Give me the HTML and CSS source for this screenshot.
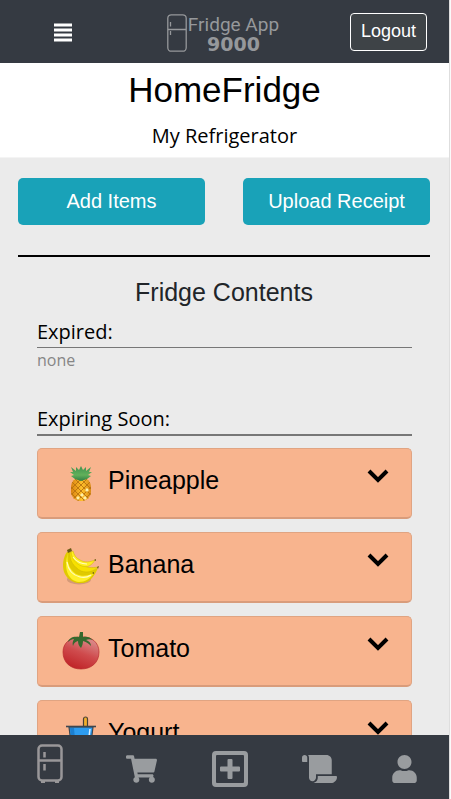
FILE: index.html
```html
<!DOCTYPE html>
<html lang="en">
<head>
<meta charset="utf-8">
<meta name="viewport" content="width=device-width, initial-scale=1">
<title>Fridge App 9000</title>
<link rel="stylesheet" href="styles.css">
</head>
<body>
<div class="app">
  <header class="topbar">
    <button class="menu" type="button" aria-label="Menu">
      <svg width="18" height="19" viewBox="0 0 18 19" fill="#fff"><path d="M0 .5h18v3H0zM0 5.500h18v3H0zM0 10.500h18v3H0zM0 15.500h18v3H0z"/></svg>
    </button>
    <a class="logo" href="#">
      <svg width="20" height="38" viewBox="0 0 20 38" fill="none" stroke="#96989b" stroke-width="1.300"><rect x=".8" y=".8" width="18.400" height="36.400" rx="3.500"/><path d="M1 15.500h18M3.500 8v4.500M3.500 17v4"/></svg>
      <span class="logo-text"><span class="logo-name">Fridge App</span><span class="logo-number">9000</span></span>
    </a>
    <button class="logout" type="button">Logout</button>
  </header>

  <main class="content">
    <section class="heading">
      <h1>HomeFridge</h1>
      <p>My Refrigerator</p>
    </section>
    <section class="body">
      <div class="actions">
        <button type="button">Add Items</button>
        <button type="button">Upload Receipt</button>
      </div>
      <h2>Fridge Contents</h2>
      <div class="lists">
        <h3>Expired:</h3>
        <p class="none">none</p>
        <h3 class="soon">Expiring Soon:</h3>
        <div class="items">
          <button class="item" type="button">
            <svg class="food" viewBox="0 0 38 38">
              <defs>
                <linearGradient id="pine" x2="1"><stop stop-color="#d98210"/><stop offset=".55" stop-color="#ffc02b"/><stop offset="1" stop-color="#d98a18"/></linearGradient>
                <linearGradient id="leaf" x2="0" y2="1"><stop stop-color="#3d9150"/><stop offset=".6" stop-color="#62b05a"/><stop offset="1" stop-color="#2f7d43"/></linearGradient>
                <clipPath id="fruit"><rect x="9" y="13.500" width="20" height="23.500" rx="9"/></clipPath>
              </defs>
              <rect x="9" y="13.500" width="20" height="23.500" rx="9" fill="url(#pine)"/>
              <g clip-path="url(#fruit)">
                <path fill="none" stroke="#b8720f" stroke-width=".9" d="M8 10l24 24M14 10l20 20M8 16l24 24M8 22l18 18M8 28l12 12M30 10L6 34M24 10L6 28M32 14L8 38M32 20L12 40M32 26L18 40"/>
                <path fill="#fff0a8" d="M25 24l2 2-2 2-2-2zM20 29l2 2-2 2-2-2zM16 32l2 2-2 2-2-2zM23 32l2 2-2 2-2-2z"/>
              </g>
              <path fill="url(#leaf)" d="M19 2l2 4 3-3v4l5-4-2 5 3 0-4 3 3 1-4 3-3 1-3 1-3-1-3-1-4-3 3-1-4-3 3 0-2-5 5 4V3l3 3z"/>
            </svg>
            <span class="name">Pineapple</span>
            <svg class="chevron" viewBox="0 0 22 14"><path d="M2 2l9 9 9-9"/></svg>
          </button>
          <button class="item" type="button">
            <svg class="food" viewBox="0 0 38 38">
              <ellipse cx="17" cy="31.500" rx="12" ry="5" fill="#d49a78"/>
              <path fill="#e0ca00" d="M5 4C1 9 0 18 2 24c3 8 11 12 18 11 7 0 12-6 16-15-7 4-12 4-16 2C13 18 9 12 9 4z"/>
              <path fill="#fff02a" d="M6 5C4 14 8 22 14 26c6 3 12 2 18-1-4 6-9 9-15 9C6 33 1 20 6 5z"/>
              <path fill="#f7e100" stroke="#cbb500" stroke-width=".5" d="M8 4c-1 9 4 15 11 19 6 2 12 1 17-4-6 1-11 1-15-2-6-3-10-7-11-13z"/>
              <path fill="#ffef20" stroke="#cbb500" stroke-width=".5" d="M9 4c1 7 5 12 11 14 6 2 10-1 13-6-5 2-10 3-15 0-4-2-6-5-7-9z"/>
              <path fill="none" stroke="#fffcc0" stroke-width="1.200" d="M5 14c1 7 5 13 13 15 4 1 8 0 11-2M11 9c3 4 8 7 14 7"/>
              <path fill="#6b5b14" d="M5 2l4-2 1 3-4 2zM32 12l2-1v2zM35 19l2-1-1 3zM30 25l2-1v2z"/>
            </svg>
            <span class="name">Banana</span>
            <svg class="chevron" viewBox="0 0 22 14"><path d="M2 2l9 9 9-9"/></svg>
          </button>
          <button class="item" type="button">
            <svg class="food" viewBox="0 0 38 38">
              <defs><linearGradient id="tom" x1=".7" y1=".1" x2=".3" y2="1"><stop stop-color="#d98585"/><stop offset=".45" stop-color="#cf4b4d"/><stop offset="1" stop-color="#bf2226"/></linearGradient></defs>
              <path fill="url(#tom)" stroke="#b92b2d" stroke-width=".7" d="M19 5c11-1 18 6 18 15 0 11-8 17-18 17S1 31 1 20C1 11 8 5 19 5z"/>
              <path fill="#36692e" d="M18 0h3v5c4-1 7 0 10 3-3-1-5-1-7 0 3 1 5 3 5 6-3-3-5-4-8-5 0 3-1 5-2 7-2-2-3-4-3-7-3 1-4 2-5 5-1-3 0-5 1-7-2 0-4 1-6 3 1-4 5-6 11-5z"/>
            </svg>
            <span class="name">Tomato</span>
            <svg class="chevron" viewBox="0 0 22 14"><path d="M2 2l9 9 9-9"/></svg>
          </button>
          <button class="item" type="button">
            <svg class="food" viewBox="0 0 38 38">
              <rect x="21.500" y="1" width="4" height="12" rx="2" fill="#f2ae2c" stroke="#4a4238" stroke-width="1.200"/>
              <path fill="#2d9cf0" stroke="#3d4650" stroke-width="1.200" d="M7 11h24l-3 24H10z"/>
              <path fill="#1c7fd0" d="M8 12h4l2 22h-3z"/><path stroke="#d8efff" stroke-width="1.500" d="M28 13l-1 8"/>
              <path stroke="#3d4650" stroke-width="1.600" d="M4 10.500h30"/>
            </svg>
            <span class="name">Yogurt</span>
            <svg class="chevron" viewBox="0 0 22 14"><path d="M2 2l9 9 9-9"/></svg>
          </button>
        </div>
      </div>
    </section>
  </main>

  <nav class="tabbar">
    <a class="tab tab-fridge" href="#" aria-label="Fridge">
      <svg width="26" height="39" viewBox="0 0 26 39" fill="none" stroke="#999799" stroke-width="2.500"><rect x="1.500" y="1.500" width="23" height="35" rx="3.500"/><path d="M1 16.500h24M7.500 8v5.500M7.500 20v6.500M4 38h4M18 38h4"/></svg>
    </a>
    <a class="tab" href="#" aria-label="Shopping cart">
      <svg width="31" height="28" viewBox="0 0 576 512"><path d="M528.12 301.319l47.273-208C578.806 78.301 567.391 64 551.99 64H159.208l-9.166-44.81C147.758 8.021 137.93 0 126.529 0H24C10.745 0 0 10.745 0 24v16c0 13.255 10.745 24 24 24h69.883l70.248 343.435C147.325 417.1 136 435.222 136 456c0 30.928 25.072 56 56 56s56-25.072 56-56c0-15.674-6.447-29.835-16.824-40h209.647C430.447 426.165 424 440.326 424 456c0 30.928 25.072 56 56 56s56-25.072 56-56c0-22.172-12.888-41.332-31.579-50.405l5.517-24.276c3.413-15.018-8.002-29.319-23.403-29.319H218.117l-6.545-32h293.145c11.206 0 20.92-7.754 23.403-18.681z"/></svg>
    </a>
    <a class="tab tab-add" href="#" aria-label="Add">
      <svg width="36" height="36" viewBox="0 0 36 36"><path fill-rule="evenodd" d="M4 0h28a4 4 0 0 1 4 4v28a4 4 0 0 1-4 4H4a4 4 0 0 1-4-4V4a4 4 0 0 1 4-4zm1 4a1 1 0 0 0-1 1v26a1 1 0 0 0 1 1h26a1 1 0 0 0 1-1V5a1 1 0 0 0-1-1z"/><path d="M15.500 9a1 1 0 0 1 1-1h3a1 1 0 0 1 1 1v6.500H27a1 1 0 0 1 1 1v3a1 1 0 0 1-1 1h-6.500V27a1 1 0 0 1-1 1h-3a1 1 0 0 1-1-1v-6.500H9a1 1 0 0 1-1-1v-3a1 1 0 0 1 1-1h6.500z"/></svg>
    </a>
    <a class="tab" href="#" aria-label="Receipts">
      <svg width="35" height="28" viewBox="0 0 640 512"><path d="M48 0C21.53 0 0 21.53 0 48v64c0 8.84 7.16 16 16 16h80V48C96 21.53 74.47 0 48 0zm208 412.57V352h288V96c0-52.94-43.06-96-96-96H111.59C121.74 13.41 128 29.92 128 48v368c0 38.87 34.65 69.65 74.75 63.12C234.22 474 256 444.46 256 412.57zM288 384v32c0 52.93-43.06 96-96 96h336c61.86 0 112-50.14 112-112 0-8.84-7.16-16-16-16H288z"/></svg>
    </a>
    <a class="tab" href="#" aria-label="Account">
      <svg width="25" height="28" viewBox="0 0 448 512"><path d="M224 256c70.700 0 128-57.300 128-128S294.700 0 224 0 96 57.300 96 128s57.300 128 128 128zm89.600 22h-16.700c-22.200 10.200-46.900 16-72.900 16s-50.600-5.800-72.900-16h-16.700C60.200 278 0 338.200 0 412.400V464c0 26.500 21.500 48 48 48h352c26.500 0 48-21.500 48-48v-51.600c0-74.200-60.200-134.400-134.400-134.400z"/></svg>
    </a>
  </nav>
</div>
</body>
</html>
```
FILE: styles.css
```css
* {
  box-sizing: border-box;
}

body {
  margin: 0;
  padding-right: 1px;
  background: #fafafa;
  color: #000;
  font-family: "Liberation Sans", Arial, sans-serif;
}

h1, h2, h3, p {
  margin: 0;
  font-weight: 400;
}

button {
  font-family: inherit;
  cursor: pointer;
}

svg {
  display: block;
  flex: none;
}

.app {
  display: flex;
  flex-direction: column;
  height: 100vh;
  border-right: 1px solid #dedede;
  background: #ebebeb;
}

.topbar {
  display: flex;
  flex: none;
  align-items: center;
  justify-content: space-between;
  height: 63px;
  padding: 0 22px 0 54px;
  background: #353a42;
}

.menu {
  padding: 2px 0 0;
  border: 0;
  background: none;
}

.logo {
  display: flex;
  align-items: center;
  gap: 1px;
  margin-left: 24px;
  padding-top: 2px;
  color: #96989b;
  text-decoration: none;
}

.logo-text {
  display: flex;
  flex-direction: column;
  align-items: center;
}

.logo-name {
  font: 19px/22px Roboto, sans-serif;
}

.logo-number {
  font: 700 19px/16px "DejaVu Sans", sans-serif;
}

.logout {
  height: 38px;
  padding: 0 10px;
  border: 1px solid #fff;
  border-radius: 4px;
  background: #3e4347;
  color: #fff;
  font-size: 18px;
}

.content {
  flex: 1;
  min-height: 0;
  overflow: hidden;
}

.heading {
  padding: 6px 0;
  border-bottom: 1px solid #f4f4f4;
  background: #fff;
  text-align: center;
}

.heading h1 {
  font-size: 35px;
  line-height: 42px;
}

.heading p {
  padding-top: 10px;
  font: 20px/30px "Open Sans", sans-serif;
}

.body {
  padding: 20px 19px 20px 18px;
}

.actions {
  display: grid;
  grid-template-columns: 1fr 1fr;
  gap: 38px;
  padding-bottom: 30px;
  border-bottom: 2px solid #000;
}

.actions button {
  height: 47px;
  padding: 0;
  border: 0;
  border-radius: 5px;
  background: #19a2b8;
  color: #fff;
  font-size: 20px;
}

.body h2 {
  padding-top: 20px;
  color: #212529;
  font-size: 25px;
  line-height: 30px;
  text-align: center;
}

.lists {
  padding: 10px 18px 0 19px;
}

.lists h3 {
  border-bottom: 1px solid #777;
  font: 20px/30px "Open Sans", sans-serif;
}

.none {
  color: #868686;
  font: 16px/24px "Open Sans", sans-serif;
}

.lists .soon {
  margin-top: 32px;
  border-bottom-width: 2px;
}

.items {
  display: grid;
  gap: 13px;
  padding-top: 12px;
}

.item {
  display: flex;
  align-items: flex-start;
  height: 71px;
  padding: 15px 22px 0 24px;
  border: 1px solid #e0a482;
  border-bottom: 2px solid #d99c7b;
  border-radius: 5px;
  background: #f8b48e;
  color: #000;
  text-align: left;
}

.food {
  width: 38px;
  height: 38px;
}

.name {
  flex: 1;
  padding-left: 8px;
  font-size: 25px;
  line-height: 32px;
}

.chevron {
  width: 22px;
  height: 14px;
  margin-top: 5px;
  fill: none;
  stroke: #000;
  stroke-width: 4;
}

.tabbar {
  display: flex;
  flex: none;
  align-items: flex-end;
  justify-content: space-between;
  height: 64px;
  padding: 0 32px 12px 37px;
  background: #353a42;
}

.tab {
  padding-bottom: 4px;
  fill: #999c9f;
}

.tab-add {
  padding-bottom: 0;
}

.tab-fridge {
  width: 34px;
}
```
